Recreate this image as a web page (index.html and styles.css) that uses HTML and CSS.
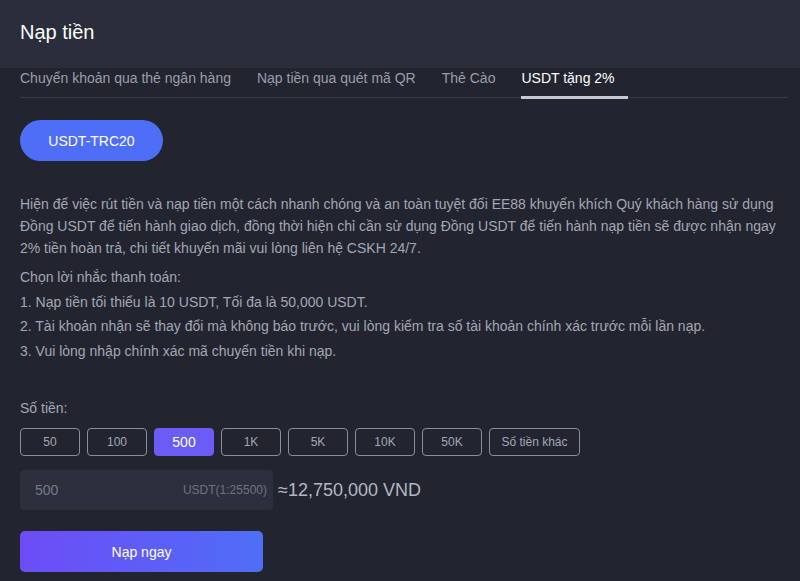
FILE: index.html
```html
<!DOCTYPE html>
<html>
<head>
    <title>Nạp tiền</title>
    <link rel="stylesheet" href="styles.css">
</head>
<body>
    <div class="header">
        <h1>Nạp tiền</h1>
    </div>
    <div class="page">
        <div class="tabs">
            <div class="tab">Chuyển khoản qua thẻ ngân hàng</div>
            <div class="tab">Nạp tiền qua quét mã QR</div>
            <div class="tab">Thẻ Cào</div>
            <div class="tab active">USDT tặng 2%</div>
        </div>

        <button class="network">USDT-TRC20</button>

        <p class="intro">Hiện để việc rút tiền và nạp tiền một cách nhanh chóng và an toàn tuyệt đối EE88 khuyến khích Quý khách hàng sử dụng Đồng USDT để tiến hành giao dịch, đồng thời hiện chỉ cần sử dụng Đồng USDT để tiến hành nạp tiền sẽ được nhận ngay 2% tiền hoàn trả, chi tiết khuyến mãi vui lòng liên hệ CSKH 24/7.</p>

        <div class="notes">
            <div>Chọn lời nhắc thanh toán:</div>
            <div>1. Nạp tiền tối thiểu là 10 USDT, Tối đa là 50,000 USDT.</div>
            <div>2. Tài khoản nhận sẽ thay đổi mà không báo trước, vui lòng kiểm tra số tài khoản chính xác trước mỗi lần nạp.</div>
            <div>3. Vui lòng nhập chính xác mã chuyển tiền khi nạp.</div>
        </div>

        <div class="amount-label">Số tiền:</div>
        <div class="amounts">
            <button class="amount">50</button>
            <button class="amount">100</button>
            <button class="amount selected">500</button>
            <button class="amount">1K</button>
            <button class="amount">5K</button>
            <button class="amount">10K</button>
            <button class="amount">50K</button>
            <button class="amount other">Số tiền khác</button>
        </div>

        <div class="input-row">
            <div class="amount-input">
                <span class="value">500</span>
                <span class="rate">USDT(1:25500)</span>
            </div>
            <span class="converted">≈12,750,000 VND</span>
        </div>

        <button class="submit">Nạp ngay</button>
    </div>
</body>
</html>
```

FILE: styles.css
```css
body {
  margin: 0;
  font-family: "Liberation Sans", Arial, sans-serif;
  background-color: #22252f;
  color: #a3a7b4;
}
button {
  font-family: inherit;
  cursor: pointer;
}
.header {
  background-color: #2a2e3b;
  height: 68px;
  box-sizing: border-box;
  padding: 0 20px 4px;
  display: flex;
  align-items: center;
}
.header h1 {
  margin: 0;
  font-size: 20px;
  font-weight: normal;
  color: #ffffff;
}
.page {
  padding: 0 12px 0 20px;
}
.tabs {
  display: flex;
  gap: 26px;
  border-bottom: 1px solid #353a48;
  height: 30px;
  box-sizing: border-box;
  padding-top: 1px;
}
.tab {
  font-size: 14px;
  color: #9a9eab;
  line-height: 18px;
  position: relative;
}
.tab.active {
  color: #ffffff;
  padding-right: 13px;
}
.tab.active::after {
  content: "";
  position: absolute;
  left: 0;
  right: 0;
  bottom: -2px;
  height: 3px;
  background-color: #c7c9d1;
}
.network {
  margin-top: 22px;
  width: 143px;
  height: 41px;
  border: none;
  border-radius: 21px;
  background-color: #4f6ef7;
  color: #ffffff;
  font-size: 14px;
}
.intro {
  margin: 32px 0 0;
  font-size: 14px;
  line-height: 22px;
}
.notes {
  margin-top: 6px;
  font-size: 14px;
  line-height: 24.5px;
}
.amount-label {
  margin-top: 36px;
  font-size: 14px;
  line-height: 18px;
}
.amounts {
  display: flex;
  gap: 7px;
  margin-top: 11px;
}
.amount {
  width: 60px;
  height: 28px;
  border: 1px solid #8c8f9b;
  border-radius: 4px;
  background: transparent;
  color: #a3a7b4;
  font-size: 12px;
  padding: 0;
}
.amount.selected {
  background-color: #6a5cf6;
  border-color: #6a5cf6;
  color: #ffffff;
  font-size: 14px;
}
.amount.other {
  width: 91px;
  font-size: 12px;
}
.input-row {
  display: flex;
  align-items: center;
  gap: 5px;
  margin-top: 14px;
}
.amount-input {
  width: 253px;
  height: 40px;
  box-sizing: border-box;
  padding: 0 6px 0 15px;
  background-color: #2c2f3c;
  border-radius: 4px;
  display: flex;
  align-items: center;
  justify-content: space-between;
}
.value {
  font-size: 14px;
  color: #777b89;
}
.rate {
  font-size: 12px;
  color: #6f7381;
}
.converted {
  font-size: 18px;
  color: #b4b7c2;
}
.submit {
  margin-top: 21px;
  width: 243px;
  height: 41px;
  border: none;
  border-radius: 5px;
  background: linear-gradient(90deg, #6d4cf6, #4f6ef7);
  color: #ffffff;
  font-size: 14px;
}
```
